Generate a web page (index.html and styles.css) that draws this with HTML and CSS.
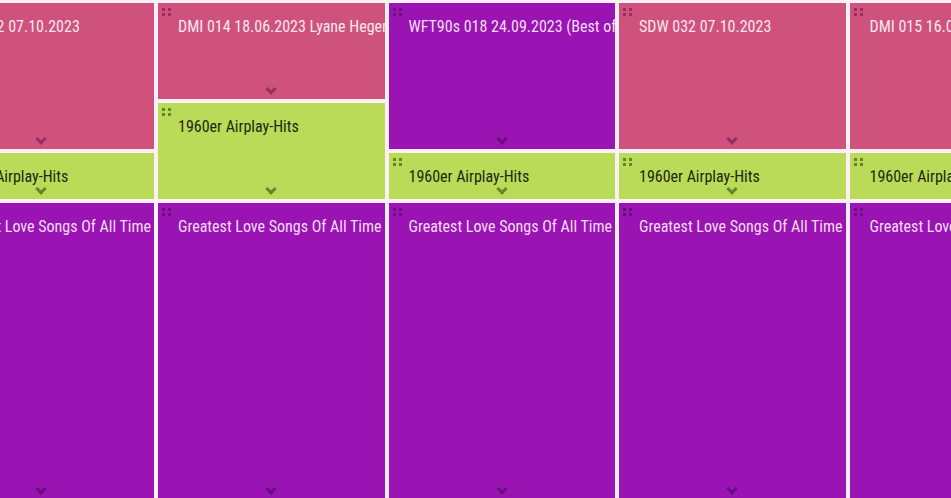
FILE: index.html
```html
<!DOCTYPE html>
<html>
<head>
<meta charset="utf-8">
<link rel="stylesheet" href="styles.css">
</head>
<body>
<div class="viewport">
  <div class="board">
    <div class="col">
      <div class="block pink h3"><span class="handle"></span><div class="title">SDW 032 07.10.2023</div><span class="chev"></span></div>
      <div class="block green h1"><span class="handle"></span><div class="title">1960er Airplay-Hits</div><span class="chev"></span></div>
      <div class="block purple h6"><span class="handle"></span><div class="title">Greatest Love Songs Of All Time</div><span class="chev"></span></div>
    </div>
    <div class="col">
      <div class="block pink h2"><span class="handle"></span><div class="title">DMI 014 18.06.2023 Lyane Hegemann</div><span class="chev"></span></div>
      <div class="block green h2"><span class="handle"></span><div class="title">1960er Airplay-Hits</div><span class="chev"></span></div>
      <div class="block purple h6"><span class="handle"></span><div class="title">Greatest Love Songs Of All Time</div><span class="chev"></span></div>
    </div>
    <div class="col">
      <div class="block purple h3"><span class="handle"></span><div class="title">WFT90s 018 24.09.2023 (Best of 90s)</div><span class="chev"></span></div>
      <div class="block green h1"><span class="handle"></span><div class="title">1960er Airplay-Hits</div><span class="chev"></span></div>
      <div class="block purple h6"><span class="handle"></span><div class="title">Greatest Love Songs Of All Time</div><span class="chev"></span></div>
    </div>
    <div class="col">
      <div class="block pink h3"><span class="handle"></span><div class="title">SDW 032 07.10.2023</div><span class="chev"></span></div>
      <div class="block green h1"><span class="handle"></span><div class="title">1960er Airplay-Hits</div><span class="chev"></span></div>
      <div class="block purple h6"><span class="handle"></span><div class="title">Greatest Love Songs Of All Time</div><span class="chev"></span></div>
    </div>
    <div class="col">
      <div class="block pink h3"><span class="handle"></span><div class="title">DMI 015 16.07.2023</div><span class="chev"></span></div>
      <div class="block green h1"><span class="handle"></span><div class="title">1960er Airplay-Hits</div><span class="chev"></span></div>
      <div class="block purple h6"><span class="handle"></span><div class="title">Greatest Love Songs Of All Time</div><span class="chev"></span></div>
    </div>
  </div>
</div>
</body>
</html>
```
FILE: styles.css
```css
html, body {
  margin: 0;
  padding: 0;
  background: #fcf0f8;
  overflow: hidden;
}
.viewport {
  width: 951px;
  height: 498px;
  overflow: hidden;
}
.board {
  display: flex;
  gap: 4px;
  margin-left: -72.5px;
  padding-top: 3px;
}
.col {
  flex: 0 0 226.5px;
  width: 226.5px;
  min-width: 0;
  display: flex;
  flex-direction: column;
  gap: 4.5px;
}
.block {
  position: relative;
  overflow: hidden;
  box-sizing: border-box;
  padding: 14px 0 0 20px;
  flex-shrink: 0;
}
.h1 { height: 45.5px; }
.h2 { height: 95.5px; }
.h3 { height: 145.5px; }
.h6 { height: 295.5px; }
.title {
  font-family: "Roboto Condensed", "Liberation Sans Narrow", "DejaVu Sans Condensed", Roboto, sans-serif;
  font-size: 16px;
  line-height: 20px;
  white-space: nowrap;
}
.pink { background: #cf527c; color: #fbe6f0; --dark: #933060; }
.green { background: #b9db58; color: #1e2812; --dark: #66852a; }
.purple { background: #9914b3; color: #f7dcf6; --dark: #6a0d80; }
.handle {
  position: absolute;
  left: 4px;
  top: 5px;
  width: 9px;
  height: 8px;
}
.handle::before, .handle::after {
  content: "";
  position: absolute;
  left: 0;
  width: 3px;
  height: 3px;
  background: var(--dark);
  box-shadow: 6px 0 0 var(--dark);
}
.handle::before { top: 0; }
.handle::after { top: 5px; }
.chev {
  position: absolute;
  left: 50%;
  bottom: 4px;
  width: 8px;
  height: 8px;
  margin-left: -4px;
  border-right: 3px solid var(--dark);
  border-bottom: 3px solid var(--dark);
  box-sizing: border-box;
  transform: translateY(-2px) rotate(45deg);
}
```
